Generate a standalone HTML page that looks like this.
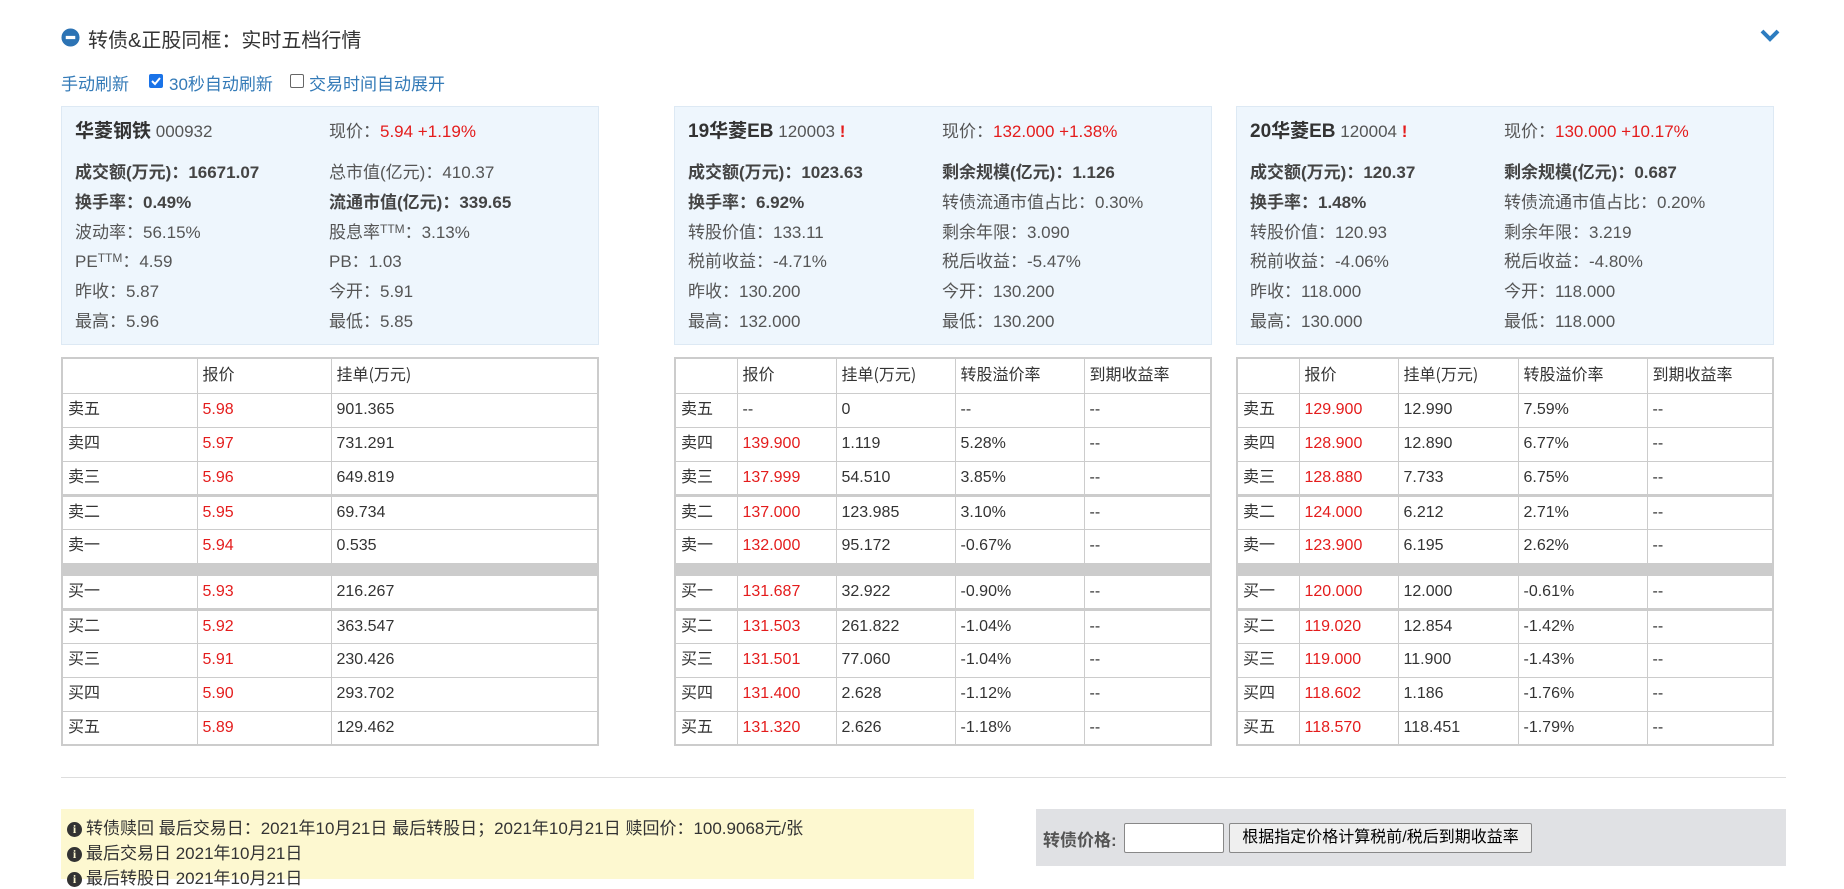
<!DOCTYPE html>
<html><head><meta charset="utf-8">
<style>
*{margin:0;padding:0;box-sizing:border-box}
body{width:1844px;height:879px;overflow:hidden;background:#fff;font-family:"Liberation Sans","Noto Sans CJK SC",sans-serif;color:#333;position:relative}
.a{position:absolute;white-space:nowrap}
.title{left:88px;top:24px;font-size:20px;color:#333}
.links{top:70px;font-size:17px;color:#337ab7}
.cb{position:absolute;width:14px;height:14px;border:1px solid #666;border-radius:2px;top:74px;background:#fff}
.panel{position:absolute;top:106px;width:538px;height:239px;background:#eef6fd;border:1px solid #dde9f4;font-size:17px;color:#555}
.panel .r{position:absolute;white-space:nowrap;line-height:22px}
.b{font-weight:bold;color:#444}
.red{color:#e41c1c}
.name{font-size:19px;font-weight:bold;color:#333}
sup{font-size:12px;vertical-align:top;position:relative;top:-4px}
table{position:absolute;top:357px;border-collapse:collapse;font-size:16px;color:#333;border:2px solid #ccc}
td{border:1px solid #ccc;height:34px;padding:0 5px;white-space:nowrap;line-height:20px}
td:first-child,tr.h td{font-family:"Noto Sans CJK SC",sans-serif;padding-bottom:6px}
tr.h td{height:35px}
tr.t td{border-bottom:3px solid #ccc}
tr.g td{height:12px;background:#ccc;padding:0}
td.p{color:#e41c1c}
.ic{display:inline-block;width:15px;height:15px;border-radius:50%;background:#333;color:#fdf8d0;font-size:12px;font-weight:bold;text-align:center;line-height:15px;vertical-align:1px;margin-right:4px;font-family:"Liberation Serif",serif}
</style></head><body>
<svg class="a" style="left:61px;top:28px" width="19" height="19" viewBox="0 0 20 20"><circle cx="10" cy="10" r="9.5" fill="#2c73b4"/><rect x="5" y="8.3" width="10" height="3.4" fill="#fff"/></svg>
<div class="a title">转债&amp;正股同框：实时五档行情</div>
<svg class="a" style="left:1760px;top:28px" width="20" height="14" viewBox="0 0 20 14"><path d="M2 3 L10 11 L18 3" fill="none" stroke="#2c7cc0" stroke-width="4"/></svg>
<div class="a links" style="left:61px">手动刷新</div>
<div class="cb" style="left:149px;background:#1a73e8;border-color:#1a73e8"><svg width="12" height="12" viewBox="0 0 12 12" style="position:absolute;left:0;top:0"><path d="M2 6 L5 9 L10 3" fill="none" stroke="#fff" stroke-width="2"/></svg></div>
<div class="a links" style="left:169px">30秒自动刷新</div>
<div class="cb" style="left:290px"></div>
<div class="a links" style="left:309px">交易时间自动展开</div>

<div class="panel" style="left:61px">
<div class="r" style="left:13px;top:14px"><span class="name">华菱钢铁</span> 000932</div>
<div class="r" style="left:267px;top:14px">现价：<span class="red">5.94 +1.19%</span></div>
<div class="r b" style="left:13px;top:55px">成交额(万元)：16671.07</div>
<div class="r" style="left:267px;top:55px">总市值(亿元)：410.37</div>
<div class="r b" style="left:13px;top:85px">换手率：0.49%</div>
<div class="r b" style="left:267px;top:85px">流通市值(亿元)：339.65</div>
<div class="r" style="left:13px;top:115px">波动率：56.15%</div>
<div class="r" style="left:267px;top:115px">股息率<sup>TTM</sup>：3.13%</div>
<div class="r" style="left:13px;top:144px">PE<sup>TTM</sup>：4.59</div>
<div class="r" style="left:267px;top:144px">PB：1.03</div>
<div class="r" style="left:13px;top:174px">昨收：5.87</div>
<div class="r" style="left:267px;top:174px">今开：5.91</div>
<div class="r" style="left:13px;top:204px">最高：5.96</div>
<div class="r" style="left:267px;top:204px">最低：5.85</div>
</div>

<div class="panel" style="left:674px">
<div class="r" style="left:13px;top:14px"><span class="name">19华菱EB</span> 120003 <b class="red">!</b></div>
<div class="r" style="left:267px;top:14px">现价：<span class="red">132.000 +1.38%</span></div>
<div class="r b" style="left:13px;top:55px">成交额(万元)：1023.63</div>
<div class="r b" style="left:267px;top:55px">剩余规模(亿元)：1.126</div>
<div class="r b" style="left:13px;top:85px">换手率：6.92%</div>
<div class="r" style="left:267px;top:85px">转债流通市值占比：0.30%</div>
<div class="r" style="left:13px;top:115px">转股价值：133.11</div>
<div class="r" style="left:267px;top:115px">剩余年限：3.090</div>
<div class="r" style="left:13px;top:144px">税前收益：-4.71%</div>
<div class="r" style="left:267px;top:144px">税后收益：-5.47%</div>
<div class="r" style="left:13px;top:174px">昨收：130.200</div>
<div class="r" style="left:267px;top:174px">今开：130.200</div>
<div class="r" style="left:13px;top:204px">最高：132.000</div>
<div class="r" style="left:267px;top:204px">最低：130.200</div>
</div>

<div class="panel" style="left:1236px">
<div class="r" style="left:13px;top:14px"><span class="name">20华菱EB</span> 120004 <b class="red">!</b></div>
<div class="r" style="left:267px;top:14px">现价：<span class="red">130.000 +10.17%</span></div>
<div class="r b" style="left:13px;top:55px">成交额(万元)：120.37</div>
<div class="r b" style="left:267px;top:55px">剩余规模(亿元)：0.687</div>
<div class="r b" style="left:13px;top:85px">换手率：1.48%</div>
<div class="r" style="left:267px;top:85px">转债流通市值占比：0.20%</div>
<div class="r" style="left:13px;top:115px">转股价值：120.93</div>
<div class="r" style="left:267px;top:115px">剩余年限：3.219</div>
<div class="r" style="left:13px;top:144px">税前收益：-4.06%</div>
<div class="r" style="left:267px;top:144px">税后收益：-4.80%</div>
<div class="r" style="left:13px;top:174px">昨收：118.000</div>
<div class="r" style="left:267px;top:174px">今开：118.000</div>
<div class="r" style="left:13px;top:204px">最高：130.000</div>
<div class="r" style="left:267px;top:204px">最低：118.000</div>
</div>

<table style="left:61px;width:538px">
<colgroup><col style="width:135px"><col style="width:134px"><col></colgroup>
<tr class="h"><td></td><td>报价</td><td>挂单(万元)</td></tr>
<tr><td>卖五</td><td class="p">5.98</td><td>901.365</td></tr>
<tr><td>卖四</td><td class="p">5.97</td><td>731.291</td></tr>
<tr class="t"><td>卖三</td><td class="p">5.96</td><td>649.819</td></tr>
<tr><td>卖二</td><td class="p">5.95</td><td>69.734</td></tr>
<tr><td>卖一</td><td class="p">5.94</td><td>0.535</td></tr>
<tr class="g"><td colspan="3"></td></tr>
<tr class="t"><td>买一</td><td class="p">5.93</td><td>216.267</td></tr>
<tr><td>买二</td><td class="p">5.92</td><td>363.547</td></tr>
<tr><td>买三</td><td class="p">5.91</td><td>230.426</td></tr>
<tr><td>买四</td><td class="p">5.90</td><td>293.702</td></tr>
<tr><td>买五</td><td class="p">5.89</td><td>129.462</td></tr>
</table>

<table style="left:674px;width:538px">
<colgroup><col style="width:62px"><col style="width:99px"><col style="width:119px"><col style="width:129px"><col></colgroup>
<tr class="h"><td></td><td>报价</td><td>挂单(万元)</td><td>转股溢价率</td><td>到期收益率</td></tr>
<tr><td>卖五</td><td>--</td><td>0</td><td>--</td><td>--</td></tr>
<tr><td>卖四</td><td class="p">139.900</td><td>1.119</td><td>5.28%</td><td>--</td></tr>
<tr class="t"><td>卖三</td><td class="p">137.999</td><td>54.510</td><td>3.85%</td><td>--</td></tr>
<tr><td>卖二</td><td class="p">137.000</td><td>123.985</td><td>3.10%</td><td>--</td></tr>
<tr><td>卖一</td><td class="p">132.000</td><td>95.172</td><td>-0.67%</td><td>--</td></tr>
<tr class="g"><td colspan="5"></td></tr>
<tr class="t"><td>买一</td><td class="p">131.687</td><td>32.922</td><td>-0.90%</td><td>--</td></tr>
<tr><td>买二</td><td class="p">131.503</td><td>261.822</td><td>-1.04%</td><td>--</td></tr>
<tr><td>买三</td><td class="p">131.501</td><td>77.060</td><td>-1.04%</td><td>--</td></tr>
<tr><td>买四</td><td class="p">131.400</td><td>2.628</td><td>-1.12%</td><td>--</td></tr>
<tr><td>买五</td><td class="p">131.320</td><td>2.626</td><td>-1.18%</td><td>--</td></tr>
</table>

<table style="left:1236px;width:538px">
<colgroup><col style="width:62px"><col style="width:99px"><col style="width:120px"><col style="width:129px"><col></colgroup>
<tr class="h"><td></td><td>报价</td><td>挂单(万元)</td><td>转股溢价率</td><td>到期收益率</td></tr>
<tr><td>卖五</td><td class="p">129.900</td><td>12.990</td><td>7.59%</td><td>--</td></tr>
<tr><td>卖四</td><td class="p">128.900</td><td>12.890</td><td>6.77%</td><td>--</td></tr>
<tr class="t"><td>卖三</td><td class="p">128.880</td><td>7.733</td><td>6.75%</td><td>--</td></tr>
<tr><td>卖二</td><td class="p">124.000</td><td>6.212</td><td>2.71%</td><td>--</td></tr>
<tr><td>卖一</td><td class="p">123.900</td><td>6.195</td><td>2.62%</td><td>--</td></tr>
<tr class="g"><td colspan="5"></td></tr>
<tr class="t"><td>买一</td><td class="p">120.000</td><td>12.000</td><td>-0.61%</td><td>--</td></tr>
<tr><td>买二</td><td class="p">119.020</td><td>12.854</td><td>-1.42%</td><td>--</td></tr>
<tr><td>买三</td><td class="p">119.000</td><td>11.900</td><td>-1.43%</td><td>--</td></tr>
<tr><td>买四</td><td class="p">118.602</td><td>1.186</td><td>-1.76%</td><td>--</td></tr>
<tr><td>买五</td><td class="p">118.570</td><td>118.451</td><td>-1.79%</td><td>--</td></tr>
</table>

<div class="a" style="left:61px;top:777px;width:1725px;height:1px;background:#ddd"></div>

<div class="a" style="left:61px;top:809px;width:913px;height:70px;background:#fdf8d0;font-size:17px;color:#333">
<div class="a" style="left:6px;top:5px"><span class="ic">i</span>转债赎回 最后交易日：2021年10月21日 最后转股日；2021年10月21日 赎回价：100.9068元/张</div>
<div class="a" style="left:6px;top:30px"><span class="ic">i</span>最后交易日 2021年10月21日</div>
<div class="a" style="left:6px;top:55px"><span class="ic">i</span>最后转股日 2021年10月21日</div>
</div>

<div class="a" style="left:1036px;top:809px;width:750px;height:57px;background:#e0e1e4">
<div class="a" style="left:7px;top:17px;font-size:17px;font-weight:bold;color:#555">转债价格:</div>
<div class="a" style="left:88px;top:14px;width:100px;height:30px;background:#fff;border:1px solid #888;border-radius:2px"></div>
<div class="a" style="left:193px;top:14px;width:303px;height:30px;background:#efefef;border:1px solid #888;border-radius:2px;font-size:16px;color:#000;text-align:center;line-height:28px">根据指定价格计算税前/税后到期收益率</div>
</div>
</body></html>
